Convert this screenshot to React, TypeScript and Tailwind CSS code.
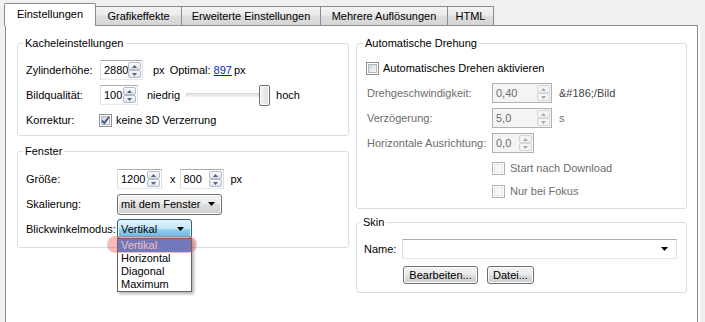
import { ReactNode } from "react";

const BTN_BG =
  "bg-[linear-gradient(#f2f2f2_0%,#ebebeb_50%,#dddddd_50%,#cfcfcf_100%)]";

function Arrow({ up, color }: { up?: boolean; color: string }) {
  return (
    <svg width="5" height="3" viewBox="0 0 5 3" className="block">
      <path d={up ? "M2.5 0L5 3H0Z" : "M0 0H5L2.5 3Z"} fill={color} />
    </svg>
  );
}

function Spin({
  value,
  className,
  disabled,
}: {
  value: string;
  className: string;
  disabled?: boolean;
}) {
  const arrow = disabled ? "#a7aaae" : "#4d6185";
  const btn = `flex flex-1 items-center justify-center rounded-[2px] border ${
    disabled
      ? "border-[#d4d6d9] bg-[#f4f4f4]"
      : "border-[#b6bcc6] bg-[linear-gradient(#f9fafc,#dfe4ea)]"
  }`;
  return (
    <div
      className={`flex h-[20px] items-stretch border ${
        disabled
          ? "border-[#adb2b5] bg-[#f4f4f4] text-[#6d6d6d]"
          : "border-[#abadb3] border-x-[#dbdfe6] border-b-[#e3e9ef] bg-white"
      } ${className}`}
    >
      <span className="flex flex-1 items-center pl-[3px] leading-none">
        {value}
      </span>
      <div className="flex w-[14px] flex-col py-[1px] pr-[1px]">
        <div className={btn}>
          <Arrow up color={arrow} />
        </div>
        <div className={btn}>
          <Arrow color={arrow} />
        </div>
      </div>
    </div>
  );
}

function Check({ checked, disabled }: { checked?: boolean; disabled?: boolean }) {
  return (
    <div
      className={`flex h-[13px] w-[13px] shrink-0 items-center justify-center border bg-white ${
        disabled ? "border-[#b1b1b1]" : "border-[#8e8f8f]"
      }`}
    >
      <div
        className={`relative h-[9px] w-[9px] border ${
          disabled
            ? "border-[#e6e6e6] bg-[#f7f7f7]"
            : "border-[#b3b8be] bg-[linear-gradient(135deg,#d0d3d8,#f8f8f8)]"
        }`}
      >
        {checked && (
          <svg
            width="11"
            height="11"
            viewBox="0 0 11 11"
            className="absolute left-[-2px] top-[-2px]"
          >
            <path
              d="M2 5.5L4.3 8L9 2"
              fill="none"
              stroke="#3b4e8a"
              strokeWidth="1.8"
            />
          </svg>
        )}
      </div>
    </div>
  );
}

function Group({
  title,
  className,
  children,
}: {
  title: string;
  className: string;
  children: ReactNode;
}) {
  return (
    <fieldset className={`rounded-[3px] border border-[#d5dfe5] ${className}`}>
      <legend className="ml-[-3px] px-[2px] leading-[15px]">{title}</legend>
      {children}
    </fieldset>
  );
}

function Tab({ label, className }: { label: string; className: string }) {
  return (
    <div
      className={`mb-[1px] flex h-[19px] items-center justify-center border-r border-t border-[#898c95] bg-[linear-gradient(#f3f3f3_0%,#ebebeb_45%,#dedede_50%,#d6d6d6_100%)] ${className}`}
    >
      {label}
    </div>
  );
}

const DROP_ARROW = (
  <svg width="7" height="4" viewBox="0 0 7 4">
    <path d="M0 0H7L3.5 4Z" fill="#000" />
  </svg>
);

export default function App() {
  return (
    <div className="h-[322px] w-[705px] overflow-hidden bg-[#f0f0f0] pt-[3px] font-['Liberation_Sans',Arial,sans-serif] text-[11px] text-black">
      <div className="flex h-[23px] items-end pl-[4px]">
        <div className="relative z-10 flex h-[23px] w-[92px] items-center justify-center rounded-t-[2px] border border-b-0 border-[#898c95] bg-white pb-[2px]">
          Einstellungen
        </div>
        <Tab label="Grafikeffekte" className="w-[86px]" />
        <Tab label="Erweiterte Einstellungen" className="w-[139px]" />
        <Tab label="Mehrere Auflösungen" className="w-[127px]" />
        <Tab label="HTML" className="w-[46px]" />
      </div>

      <div className="-mt-px ml-[5px] h-[300px] w-[693px] border border-[#898c95] bg-white pl-[11px] pr-[10px] pt-[10px] shadow-[2px_0_0_#ffffff]">
        <div className="grid grid-cols-[332px_331px] gap-x-[7px]">
          <div className="flex flex-col gap-[8px]">
            <Group title="Kacheleinstellungen" className="pb-[5px] pl-[8px] pt-[9px]">
              <div className="flex h-[20px] items-center">
                <span className="w-[74px]">Zylinderhöhe:</span>
                <Spin value="2880" className="w-[43px]" />
                <span className="ml-[10px]">px</span>
                <span className="ml-[5px]">Optimal:</span>
                <span className="ml-[3px] text-[#0026d9] underline">897</span>
                <span className="ml-[2px]">px</span>
              </div>
              <div className="mt-[4px] flex h-[22px] items-center">
                <span className="w-[74px]">Bildqualität:</span>
                <Spin value="100" className="w-[38px]" />
                <span className="ml-[9px]">niedrig</span>
                <div className="ml-[6px] flex items-center">
                  <div className="h-[4px] w-[73px] rounded-[1px] border border-[#d6d6d6] border-b-[#f0f0f0] bg-[#e7eaea]" />
                  <div className="h-[21px] w-[11px] rounded-[2px] border border-[#707070] bg-[linear-gradient(90deg,#f4f4f4,#e0e0e0)] shadow-[inset_0_0_0_1px_#fcfcfc]" />
                </div>
                <span className="ml-[6px]">hoch</span>
              </div>
              <div className="mt-[4px] flex h-[20px] items-center">
                <span className="w-[73px]">Korrektur:</span>
                <Check checked />
                <span className="ml-[4px]">keine 3D Verzerrung</span>
              </div>
            </Group>

            <Group title="Fenster" className="pb-[8px] pl-[8px] pt-[10px]">
              <div className="flex h-[20px] items-center">
                <span className="w-[91px]">Größe:</span>
                <Spin value="1200" className="w-[45px]" />
                <span className="ml-[8px]">x</span>
                <Spin value="800" className="ml-[4px] w-[44px]" />
                <span className="ml-[7px]">px</span>
              </div>
              <div className="mt-[5px] flex h-[20px] items-center">
                <span className="w-[91px]">Skalierung:</span>
                <div
                  className={`flex h-[21px] w-[105px] items-center justify-between rounded-[3px] border border-[#707070] pl-[3px] pr-[6px] shadow-[inset_0_0_0_1px_#fcfcfc] ${BTN_BG}`}
                >
                  <span>mit dem Fenster</span>
                  {DROP_ARROW}
                </div>
              </div>
              <div className="mt-[5px] flex h-[20px] items-center">
                <span className="w-[91px]">Blickwinkelmodus:</span>
                <div className="relative">
                  <div className="flex h-[20px] w-[75px] items-center justify-between rounded-[3px] border border-[#2c628b] bg-[linear-gradient(#e5f4fc_0%,#c4e5f6_50%,#98d1ef_50%,#68b3db_100%)] pl-[3px] pr-[7px] shadow-[inset_0_0_0_1px_#e2f2fb]">
                    <span>Vertikal</span>
                    {DROP_ARROW}
                  </div>
                  <div className="absolute left-0 top-[19px] z-20 w-[75px] border border-[#646464] bg-white text-[11px] shadow-[2px_2px_3px_rgba(0,0,0,0.3)]">
                    <div className="h-[13px] bg-[#3399ff] pl-[3px] leading-[13px] text-white">
                      Vertikal
                    </div>
                    <div className="h-[13px] pl-[3px] leading-[13px]">Horizontal</div>
                    <div className="h-[13px] pl-[3px] leading-[13px]">Diagonal</div>
                    <div className="h-[13px] pl-[3px] leading-[13px]">Maximum</div>
                  </div>
                  <div className="absolute left-[-10px] top-[17px] z-30 h-[17px] w-[90px] rounded-full bg-[rgba(230,60,60,0.35)]" />
                </div>
              </div>
            </Group>
          </div>

          <div className="flex flex-col gap-[6px]">
            <Group
              title="Automatische Drehung"
              className="pb-[9px] pl-[9px] pt-[9px]"
            >
              <div className="flex h-[16px] items-center">
                <Check />
                <span className="ml-[4px]">Automatisches Drehen aktivieren</span>
              </div>
              <div className="mt-[7px] flex h-[20px] items-center text-[#6d6d6d]">
                <span className="w-[126px] pl-[1px]">Drehgeschwindigkeit:</span>
                <Spin value="0,40" className="w-[60px]" disabled />
                <span className="ml-[7px] text-[#444]">&amp;#186;/Bild</span>
              </div>
              <div className="mt-[5px] flex h-[20px] items-center text-[#6d6d6d]">
                <span className="w-[126px] pl-[1px]">Verzögerung:</span>
                <Spin value="5,0" className="w-[60px]" disabled />
                <span className="ml-[7px]">s</span>
              </div>
              <div className="mt-[5px] flex h-[20px] items-center text-[#6d6d6d]">
                <span className="w-[126px] pl-[1px]">Horizontale Ausrichtung:</span>
                <Spin value="0,0" className="w-[42px]" disabled />
              </div>
              <div className="mt-[7px] flex h-[16px] items-center pl-[126px] text-[#6d6d6d]">
                <Check disabled />
                <span className="ml-[5px]">Start nach Download</span>
              </div>
              <div className="mt-[7px] flex h-[16px] items-center pl-[126px] text-[#6d6d6d]">
                <Check disabled />
                <span className="ml-[5px]">Nur bei Fokus</span>
              </div>
            </Group>

            <Group title="Skin" className="pb-[8px] pl-[7px] pt-[9px]">
              <div className="flex h-[20px] items-center">
                <span className="w-[38px]">Name:</span>
                <div className="flex h-[20px] w-[275px] items-center justify-end border border-[#abadb3] border-x-[#dbdfe6] border-b-[#e3e9ef] bg-white pr-[8px]">
                  {DROP_ARROW}
                </div>
              </div>
              <div className="mt-[7px] flex h-[18px] gap-[9px] pl-[39px]">
                <div
                  className={`flex w-[75px] items-center justify-center rounded-[3px] border border-[#707070] shadow-[inset_0_0_0_1px_#fcfcfc] ${BTN_BG}`}
                >
                  Bearbeiten...
                </div>
                <div
                  className={`flex w-[47px] items-center justify-center rounded-[3px] border border-[#707070] shadow-[inset_0_0_0_1px_#fcfcfc] ${BTN_BG}`}
                >
                  Datei...
                </div>
              </div>
            </Group>
          </div>
        </div>
      </div>
    </div>
  );
}
